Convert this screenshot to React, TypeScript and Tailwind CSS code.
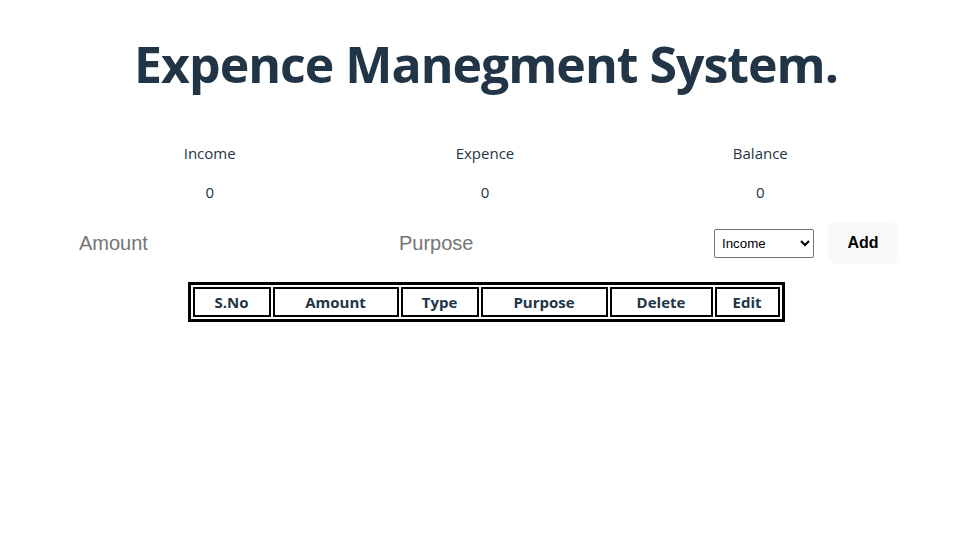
import { useState } from "react";

const stats = [
  { label: "Income", value: 0 },
  { label: "Expence", value: 0 },
  { label: "Balance", value: 0 },
];

const columns = [
  { name: "S.No", w: "w-[78px]" },
  { name: "Amount", w: "w-[126px]" },
  { name: "Type", w: "w-[78px]" },
  { name: "Purpose", w: "w-[127px]" },
  { name: "Delete", w: "w-[103px]" },
  { name: "Edit", w: "w-[65px]" },
];

export default function App() {
  const [type, setType] = useState("Income");

  return (
    <div className="min-h-[536px] bg-white text-[#213547] font-['Open_Sans',sans-serif]">
      <h1 className="pt-[37px] pr-[7px] text-center text-[50px] font-bold leading-[1.1] tracking-[-1px]">
        Expence Manegment System.
      </h1>

      <div className="ml-[72px] mt-[49px] w-[826px]">
        {/* Totals */}
        <div className="grid grid-cols-3 text-center text-[15px]">
          {stats.map((s) => (
            <div key={s.label} className="flex flex-col items-center">
              <p className="leading-[24px]">{s.label}</p>
              <p className="mt-[15px] leading-[24px]">{s.value}</p>
            </div>
          ))}
        </div>

        {/* Entry row */}
        <div className="mt-[18px] flex items-center">
          <input
            placeholder="Amount"
            className="h-[36px] w-[320px] px-[7px] font-['Liberation_Sans',sans-serif] text-[20px] outline-none placeholder:text-[#757575]"
          />
          <input
            placeholder="Purpose"
            className="h-[36px] w-[320px] px-[7px] font-['Liberation_Sans',sans-serif] text-[20px] outline-none placeholder:text-[#757575]"
          />
          <select
            value={type}
            onChange={(e) => setType(e.target.value)}
            className="ml-[2px] h-[29px] w-[100px] rounded-[2px] border border-[#767676] bg-white pl-[3px] font-['Liberation_Sans',sans-serif] text-[13.33px] text-black"
          >
            <option>Income</option>
            <option>Expence</option>
          </select>
          <button className="ml-[14px] h-[42px] w-[70px] rounded-lg bg-[#f9f9f9] font-['Liberation_Sans',sans-serif] text-[16px] font-bold text-black">
            Add
          </button>
        </div>
      </div>

      {/* Records table */}
      <div className="mt-[18px] flex justify-center">
        <table className="ml-[-7px] border-separate border-spacing-[2px] border-[3px] border-black">
          <thead>
            <tr>
              {columns.map((c) => (
                <th
                  key={c.name}
                  className={`${c.w} h-[30px] border-2 border-black p-0 text-center text-[15px] font-bold`}
                >
                  {c.name}
                </th>
              ))}
            </tr>
          </thead>
          <tbody />
        </table>
      </div>
    </div>
  );
}
